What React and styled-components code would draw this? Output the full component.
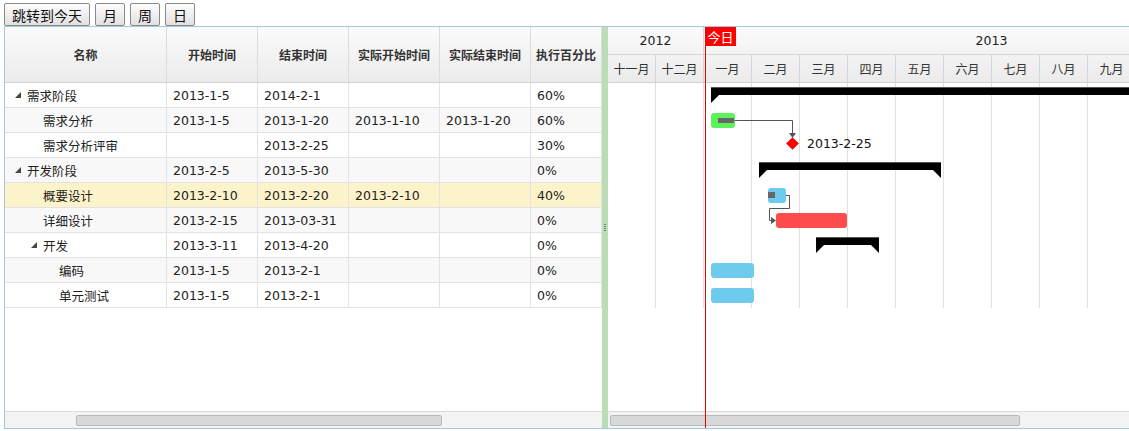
import React from "react";
import styled, { createGlobalStyle } from "styled-components";

const GlobalStyle = createGlobalStyle`
  html, body {
    margin: 0;
    padding: 0;
    background: #fff;
    overflow: hidden;
  }
  body {
    font-family: "DejaVu Sans", "Noto Sans CJK SC", sans-serif;
    font-size: 12px;
    color: #222;
  }
`;

const Page = styled.div`
  width: 1129px;
  height: 431px;
  overflow: hidden;
  padding: 3px 0 0 4px;
  box-sizing: border-box;
`;

const Toolbar = styled.div`
  display: flex;
  gap: 5px;
  height: 23px;
`;

const ToolButton = styled.button`
  height: 23px;
  padding: 0 ${(p) => (p.$wide ? "7px" : "7px")};
  font-family: "Noto Sans CJK SC", sans-serif;
  font-size: 14px;
  line-height: 20px;
  color: #111;
  background: linear-gradient(#fdfdfd, #e1e1e1);
  border: 1px solid #8a8a8a;
  border-radius: 2px;
  cursor: pointer;
`;

const Frame = styled.div`
  display: flex;
  height: 403px;
  width: 1140px;
  border: 1px solid #a6c7e3;
  box-sizing: border-box;
`;

const GridPanel = styled.div`
  width: 597px;
  display: flex;
  flex-direction: column;
`;

const GridHead = styled.div`
  display: grid;
  grid-template-columns: 162px 91px 91px 91px 91px 71px;
  height: 56px;
  background: linear-gradient(#fbfbfb, #ebebeb);
  border-bottom: 1px solid #d2d2d2;
  box-sizing: border-box;
`;

const HeadCell = styled.div`
  display: flex;
  align-items: center;
  justify-content: center;
  font-weight: bold;
  color: #333;
  font-size: 12px;
  border-right: 1px solid #dcdcdc;
`;

const GridRow = styled.div`
  display: grid;
  grid-template-columns: 162px 91px 91px 91px 91px 71px;
  height: 25px;
  background: ${(p) => (p.$selected ? "#fdf3cb" : p.$alt ? "#f8f8f8" : "#fff")};
`;

const Cell = styled.div`
  display: flex;
  align-items: center;
  padding-left: 6px;
  border-right: 1px solid #e2e2e2;
  border-bottom: 1px solid #e2e2e2;
  white-space: nowrap;
  overflow: hidden;
  font-size: 12.5px;
`;

const NameCell = styled(Cell)`
  padding-left: ${(p) => 6 + p.$level * 16}px;
`;

const Toggle = styled.span`
  display: inline-flex;
  width: 16px;
  height: 16px;
  align-items: center;
  justify-content: flex-start;
  padding-left: 4px;
  box-sizing: border-box;
`;

const Filler = styled.div`
  flex: 1;
`;

const ScrollTrack = styled.div`
  position: relative;
  height: 17px;
  background: #f3f3f3;
  border-top: 1px solid #dadada;
  box-sizing: border-box;
`;

const ScrollThumb = styled.div`
  position: absolute;
  top: 3px;
  height: 9px;
  background: #d8d8d8;
  border: 1px solid #b9b9b9;
  border-radius: 2px;
`;

const Splitter = styled.div`
  width: 6px;
  background: #badcb7;
  display: flex;
  align-items: center;
  justify-content: center;
`;

const Grip = styled.div`
  width: 2px;
  height: 8px;
  margin-left: -1px;
  background: repeating-linear-gradient(#6d8a6a 0 1px, transparent 1px 2px);
`;

const GanttPanel = styled.div`
  position: relative;
  flex: 1;
  display: flex;
  flex-direction: column;
  overflow: hidden;
`;

const GanttHead = styled.div`
  background: linear-gradient(#fbfbfb, #ebebeb);
  border-bottom: 1px solid #d2d2d2;
  height: 56px;
  box-sizing: border-box;
`;

const YearRow = styled.div`
  display: flex;
  height: 28px;
  border-bottom: 1px solid #d6d6d6;
  box-sizing: border-box;
`;

const YearCell = styled.div`
  flex: 0 0 ${(p) => p.$months * 48}px;
  display: flex;
  align-items: center;
  justify-content: center;
  font-size: 12.5px;
  color: #222;
  border-right: 1px solid #d6d6d6;
  box-sizing: border-box;
`;

const MonthRow = styled.div`
  display: flex;
  height: 27px;
`;

const MonthCell = styled.div`
  flex: 0 0 48px;
  display: flex;
  align-items: center;
  justify-content: center;
  font-family: "Noto Sans CJK SC", sans-serif;
  font-size: 12px;
  color: #333;
  border-right: 1px solid #d6d6d6;
  box-sizing: border-box;
`;

const GanttBody = styled.div`
  position: relative;
  height: 225px;
  display: flex;
`;

const MonthLane = styled.div`
  flex: 0 0 48px;
  border-right: 1px solid #e0e0e0;
  box-sizing: border-box;
`;

const TaskBar = styled.div`
  position: absolute;
  height: 15px;
  border-radius: 3px;
  background: ${(p) => p.$color};
`;

const Progress = styled.div`
  position: absolute;
  top: 5px;
  left: 0;
  height: 5px;
  background: #676767;
`;

const Summary = styled.div`
  position: absolute;
  height: 8px;
  background: #000;
  border-top: 1px solid #555;
  box-sizing: border-box;

  &::before,
  &::after {
    content: "";
    position: absolute;
    top: 7px;
    border-top: 8px solid #000;
  }
  &::before {
    left: 0;
    border-right: 8px solid transparent;
  }
  &::after {
    right: 0;
    border-left: 8px solid transparent;
    display: ${(p) => (p.$open ? "none" : "block")};
  }
`;

const Milestone = styled.div`
  position: absolute;
  width: 9px;
  height: 9px;
  background: #f00;
  transform: rotate(45deg);
`;

const MilestoneLabel = styled.span`
  position: absolute;
  font-size: 12.5px;
  color: #111;
  line-height: 16px;
`;

const Links = styled.svg`
  position: absolute;
  left: 0;
  top: 0;
  overflow: visible;
`;

const TodayLine = styled.div`
  position: absolute;
  left: 97px;
  top: 0;
  bottom: 0;
  width: 1px;
  background: #e00;
  z-index: 2;
`;

const TodayTag = styled.div`
  position: absolute;
  left: 97px;
  top: 0;
  width: 31px;
  height: 19px;
  background: #f00;
  color: #fff;
  font-family: "Noto Sans CJK SC", sans-serif;
  font-size: 13px;
  line-height: 19px;
  text-align: center;
  z-index: 3;
`;

const headers = ["名称", "开始时间", "结束时间", "实际开始时间", "实际结束时间", "执行百分比"];

const rows = [
  { name: "需求阶段", level: 0, open: true, cells: ["2013-1-5", "2014-2-1", "", "", "60%"] },
  { name: "需求分析", level: 1, cells: ["2013-1-5", "2013-1-20", "2013-1-10", "2013-1-20", "60%"] },
  { name: "需求分析评审", level: 1, cells: ["", "2013-2-25", "", "", "30%"] },
  { name: "开发阶段", level: 0, open: true, cells: ["2013-2-5", "2013-5-30", "", "", "0%"] },
  { name: "概要设计", level: 1, selected: true, cells: ["2013-2-10", "2013-2-20", "2013-2-10", "", "40%"] },
  { name: "详细设计", level: 1, cells: ["2013-2-15", "2013-03-31", "", "", "0%"] },
  { name: "开发", level: 1, open: true, cells: ["2013-3-11", "2013-4-20", "", "", "0%"] },
  { name: "编码", level: 2, cells: ["2013-1-5", "2013-2-1", "", "", "0%"] },
  { name: "单元测试", level: 2, cells: ["2013-1-5", "2013-2-1", "", "", "0%"] },
];

const months = ["十一月", "十二月", "一月", "二月", "三月", "四月", "五月", "六月", "七月", "八月", "九月"];

function Arrow() {
  return (
    <svg width="6" height="6" viewBox="0 0 6 6">
      <polygon points="6,0 6,6 0,6" fill="#444" />
    </svg>
  );
}

export default function App() {
  return (
    <Page>
      <GlobalStyle />
      <Toolbar>
        <ToolButton $wide>跳转到今天</ToolButton>
        <ToolButton>月</ToolButton>
        <ToolButton>周</ToolButton>
        <ToolButton>日</ToolButton>
      </Toolbar>
      <Frame>
        <GridPanel>
          <GridHead>
            {headers.map((h) => (
              <HeadCell key={h}>{h}</HeadCell>
            ))}
          </GridHead>
          {rows.map((r, i) => (
            <GridRow key={r.name} $alt={i % 2 === 1} $selected={r.selected}>
              <NameCell $level={r.level}>
                <Toggle>{r.open ? <Arrow /> : null}</Toggle>
                {r.name}
              </NameCell>
              {r.cells.map((c, j) => (
                <Cell key={j}>{c}</Cell>
              ))}
            </GridRow>
          ))}
          <Filler />
          <ScrollTrack>
            <ScrollThumb style={{ left: 71, width: 364 }} />
          </ScrollTrack>
        </GridPanel>
        <Splitter>
          <Grip />
        </Splitter>
        <GanttPanel>
          <GanttHead>
            <YearRow>
              <YearCell $months={2}>2012</YearCell>
              <YearCell $months={12}>2013</YearCell>
            </YearRow>
            <MonthRow>
              {months.map((m) => (
                <MonthCell key={m}>{m}</MonthCell>
              ))}
            </MonthRow>
          </GanttHead>
          <GanttBody>
            {months.map((m) => (
              <MonthLane key={m} />
            ))}
            <Summary $open style={{ left: 103, top: 4, width: 560 }} />
            <TaskBar $color="#5cf25a" style={{ left: 103, top: 30, width: 24 }}>
              <Progress style={{ left: 7, width: 16 }} />
            </TaskBar>
            <Milestone style={{ left: 180, top: 56 }} />
            <MilestoneLabel style={{ left: 199, top: 53 }}>2013-2-25</MilestoneLabel>
            <Summary style={{ left: 151, top: 79, width: 182 }} />
            <TaskBar $color="#6ecbee" style={{ left: 160, top: 105, width: 18 }}>
              <Progress style={{ width: 7, top: 4, height: 6 }} />
            </TaskBar>
            <TaskBar $color="#ff4d4f" style={{ left: 168, top: 130, width: 71 }} />
            <Summary style={{ left: 208, top: 154, width: 63 }} />
            <TaskBar $color="#6ecbee" style={{ left: 103, top: 180, width: 43 }} />
            <TaskBar $color="#6ecbee" style={{ left: 103, top: 205, width: 43 }} />
            <Links width="300" height="225">
              <polyline points="126.5,37.5 184.5,37.5 184.5,51" fill="none" stroke="#555" strokeWidth="1" />
              <polygon points="181,50 188,50 184.5,55" fill="#555" />
              <polyline points="178,112.5 181.5,112.5 181.5,125.5 161.5,125.5 161.5,137.5 164,137.5" fill="none" stroke="#555" strokeWidth="1" />
              <polygon points="163,134 168,137.5 163,141" fill="#555" />
            </Links>
          </GanttBody>
          <Filler />
          <ScrollTrack>
            <ScrollThumb style={{ left: 2, width: 408 }} />
          </ScrollTrack>
          <TodayLine />
          <TodayTag>今日</TodayTag>
        </GanttPanel>
      </Frame>
    </Page>
  );
}
